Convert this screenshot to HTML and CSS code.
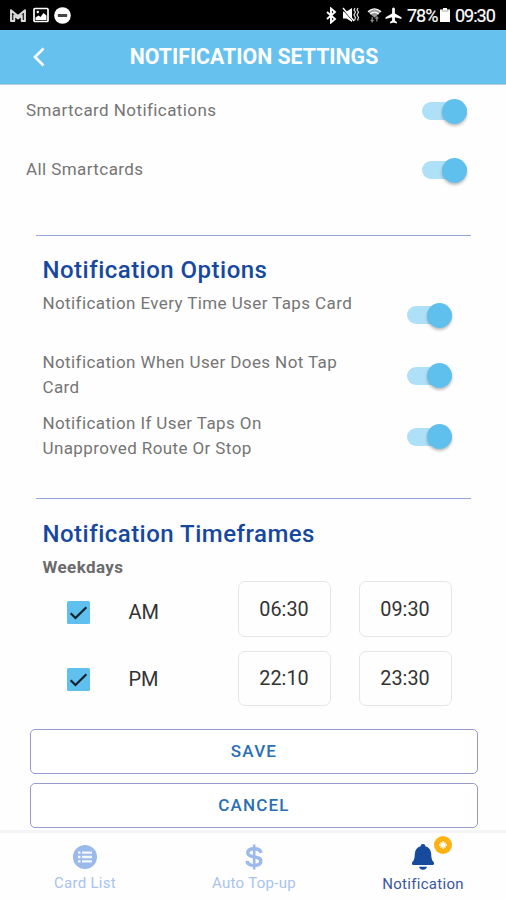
FILE: index.html
```html
<!DOCTYPE html>
<html lang="en">
<head>
<meta charset="utf-8">
<title>Notification Settings</title>
<link rel="stylesheet" href="styles.css">
</head>
<body>
<div class="status">
  <svg class="s-mail" viewBox="0 0 18 16"><path d="M2 14V3.200L9 9l7-5.800V14h-3.300V8.500L9 11.500 5.300 8.500V14z" fill="#333" stroke="#ddd" stroke-width="1.900" stroke-linejoin="round"/></svg>
  <svg class="s-pic" viewBox="0 0 16 16"><rect x="1" y="1.500" width="14" height="13" rx="1" fill="none" stroke="#fff" stroke-width="1.700"/><path d="M2.500 13V10.500L5.500 8.500l2 1.500 3-4 3 2.500V13z" fill="#fff"/><circle cx="4.800" cy="5" r="1.200" fill="#fff"/></svg>
  <svg class="s-dnd" viewBox="0 0 18 18"><circle cx="9" cy="9" r="8.800" fill="#fff"/><rect x="4" y="7.500" width="10" height="3" rx=".6" fill="#444"/></svg>
  <span class="grow"></span>
  <svg class="s-bt" viewBox="0 0 12 16"><path d="M2 4.500l8 7-4 3.500V1l4 3.500-8 7" fill="none" stroke="#fff" stroke-width="1.900"/></svg>
  <svg class="s-mute" viewBox="0 0 18 16"><path d="M1 4.500h3.500L10 1v14l-5.500-3.500H1z" fill="#fff"/><path d="M1 3l11 12" stroke="#000" stroke-width="1"/><path d="M1 1l11 13" stroke="#fff" stroke-width="1.400"/><path d="M13 1l-1 2 1.500 2L12 8l1.500 2.500-1 3M16 1l-1 2 1.500 2L15 8l1.500 2.500-1 3" fill="none" stroke="#ddd" stroke-width="1.200"/></svg>
  <svg class="s-wifi" viewBox="0 0 16 16"><path d="M1 4.500Q8-1.500 15 4.500L8 11z" fill="#999"/><path d="M1 4.500Q8-1.500 15 4.500M3.500 7Q8 3 12.500 7" fill="none" stroke="#fff" stroke-width="1.400"/><path d="M5.500 10v5M4 13.200l1.500 2 1.500-2M10.500 15v-5M9 12l1.500-2 1.500 2" fill="none" stroke="#888" stroke-width="1.300"/></svg>
  <svg class="s-plane" viewBox="0 0 16 16"><path d="M8 .5c.9 0 1.300.8 1.300 1.700V6l6.200 3.700v1.700L9.300 9.600v3.200l1.900 1.400v1.300L8 14.600l-3.200.9v-1.300l1.900-1.400V9.600L.5 11.400V9.700L6.700 6V2.200C6.700 1.300 7.100.5 8 .5z" fill="#fff"/></svg>
  <span class="pct">78%</span>
  <svg class="s-bat" viewBox="0 0 10 14"><path d="M3 0h4v1.500h3V14H0V1.500h3z" fill="#fff"/><path d="M1.500 3h7" stroke="#aaa"/></svg>
  <span class="clock">09:30</span>
</div>
<header class="bar">
  <svg class="back" viewBox="0 0 14 22"><path d="M11.500 2.500L3 11l8.500 8.500" fill="none" stroke="#fff" stroke-width="2.600"/></svg>
  <h1>NOTIFICATION SETTINGS</h1>
</header>
<main>
  <section class="cards">
    <div class="row"><span>Smartcard Notifications</span><i class="toggle"></i></div>
    <div class="row"><span>All Smartcards</span><i class="toggle"></i></div>
  </section>
  <section class="group options">
    <h2>Notification Options</h2>
    <div class="opt first"><p>Notification Every Time User Taps Card</p><i class="toggle"></i></div>
    <div class="opt"><p>Notification When User Does Not Tap<br>Card</p><i class="toggle"></i></div>
    <div class="opt"><p>Notification If User Taps On<br>Unapproved Route Or Stop</p><i class="toggle"></i></div>
  </section>
  <section class="group frames">
    <h2>Notification Timeframes</h2>
    <h3>Weekdays</h3>
    <div class="times">
      <svg class="check" viewBox="0 0 22 22"><rect width="22" height="22" rx="1.500" fill="#5fc0ee"/><path d="M3.500 11.800l4.600 4.500L18.500 6" fill="none" stroke="#10202c" stroke-width="2.100"/></svg>
      <span class="half">AM</span><span class="time">06:30</span><span class="time">09:30</span>
      <svg class="check" viewBox="0 0 22 22"><rect width="22" height="22" rx="1.500" fill="#5fc0ee"/><path d="M3.500 11.800l4.600 4.500L18.500 6" fill="none" stroke="#10202c" stroke-width="2.100"/></svg>
      <span class="half">PM</span><span class="time">22:10</span><span class="time">23:30</span>
    </div>
  </section>
  <div class="actions"><button>SAVE</button><button>CANCEL</button></div>
</main>
<nav>
  <a class="tab"><svg class="ico" viewBox="0 0 26 26"><circle cx="13" cy="13" r="12" fill="#9bb9ea"/><path d="M6 8.700h2.500M6 13h2.500M6 17.300h2.500M10 8.700h10M10 13h10M10 17.300h10" stroke="#f4f8ff" stroke-width="2.300"/></svg><span>Card List</span></a>
  <a class="tab"><svg class="ico" viewBox="0 0 26 26"><path d="M20 8.800C19.500 6.300 17 4.800 13.200 4.800 9.200 4.800 6.800 6.500 6.800 9c0 5.600 13 2.200 13 8 0 2.700-2.500 4.400-6.600 4.400-4.200 0-6.900-1.700-7.200-4.600" fill="none" stroke="#9bb9ea" stroke-width="3.400"/><path d="M13.200.5v25" stroke="#9bb9ea" stroke-width="2.600"/></svg><span>Auto Top-up</span></a>
  <a class="tab active"><svg class="ico" viewBox="0 0 26 26"><path d="M13 0c1.400 0 2.300.9 2.300 2.200 3.700 1 5.700 3.800 5.900 7.800.2 4.500.7 6.300 2.600 8.200.6.700.3 2.800-1 2.800H3.200c-1.300 0-1.600-2.100-1-2.800C4.100 16.300 4.600 14.500 4.800 10c.2-4 2.200-6.800 5.900-7.800C10.700.9 11.600 0 13 0z" fill="#164b9d"/><path d="M9 22.800h8c-.4 1.900-2 3-4 3s-3.600-1.100-4-3z" fill="#164b9d"/></svg><svg class="badge" viewBox="0 0 18 18"><circle cx="9" cy="9" r="9" fill="#fcb312"/><path d="M9 5v8M5 9h8M6.500 6.500l5 5M11.500 6.500l-5 5" stroke="#fff" stroke-width="1.300"/></svg><span>Notification</span></a>
</nav>
</body>
</html>
```
FILE: styles.css
```css
* { box-sizing: border-box; }
body {
  margin: 0;
  width: 506px;
  height: 900px;
  overflow: hidden;
  display: flex;
  flex-direction: column;
  background: #fefefe;
  font-family: Roboto, "Liberation Sans", sans-serif;
  color: #757575;
}
h1, h2, h3, p { margin: 0; }

.status {
  flex: none;
  height: 30px;
  display: flex;
  align-items: center;
  padding: 0 11px 0 9px;
  background: #000;
  color: #fff;
  font-size: 18px;
  line-height: 31px;
}
.status svg { flex: none; }
.s-mail { width: 18px; height: 16px; }
.s-pic { width: 16px; height: 16px; margin-left: 6px; }
.s-dnd { width: 17px; height: 17px; margin-left: 5px; }
.grow { flex: 1; }
.s-bt { width: 12px; height: 17px; margin-right: 5px; }
.s-mute { width: 18px; height: 16px; margin-right: 7px; }
.s-wifi { width: 15px; height: 16px; margin-right: 3px; }
.s-plane { width: 17px; height: 17px; margin-right: 5px; }
.s-bat { width: 10px; height: 14px; margin: 0 5px 0 4px; }
.pct, .clock { letter-spacing: -1px; -webkit-text-stroke: 0.2px #fff; }
.pct { width: 29px; }
.clock { width: 40px; white-space: nowrap; }

.bar {
  flex: none;
  height: 55px;
  display: grid;
  grid-template-columns: 48px 1fr 46px;
  align-items: center;
  background: #66c1ef;
  border-bottom: 1px solid #b5cfdd;
}
.back { width: 14px; height: 22px; margin-left: 32px; }
h1 {
  text-align: center;
  color: #fff;
  font-size: 21.300px;
  line-height: 54px;
  font-weight: 700;
  white-space: nowrap;
}

main { flex: none; height: 745px; }
.cards { height: 150px; padding: 0 39px 0 26px; }
.row {
  display: flex;
  justify-content: space-between;
  align-items: center;
  font-size: 17px;
  letter-spacing: 0.420px;
}
.row:first-child { height: 52px; }
.row:nth-child(2) { height: 66px; }
.row span { margin-bottom: 2px; }

.toggle {
  flex: none;
  width: 45px;
  height: 18px;
  border-radius: 9px;
  background: #aee0f8;
  display: flex;
  justify-content: flex-end;
  align-items: center;
}
.toggle::after {
  content: "";
  width: 25px;
  height: 25px;
  border-radius: 50%;
  background: #5fc0ee;
  box-shadow: 0 2px 3px rgba(0, 0, 0, 0.25);
}

.group { margin: 0 35px 0 36px; border-top: 1.500px solid #94a6d8; padding-left: 6.500px; }
.options { height: 263px; padding-top: 19px; }
.frames { height: 230px; padding-top: 20px; }
h2 {
  color: #17489f;
  font-size: 24px;
  line-height: 30px;
  font-weight: 500;
  letter-spacing: 0.480px;
  white-space: nowrap;
}
.opt {
  height: 61px;
  display: flex;
  justify-content: space-between;
  align-items: center;
  padding-right: 19px;
  font-size: 17px;
  line-height: 24.500px;
  letter-spacing: 0.400px;
  white-space: nowrap;
}
.opt p { margin-bottom: 2px; }
.opt.first { height: 60px; }
.opt.first p { margin-bottom: 24px; }

h3 { font-size: 17px; line-height: 24px; margin-top: 6px; font-weight: 700; letter-spacing: 0.400px; color: #6b6b6b; }
.times {
  display: grid;
  grid-template-columns: 62px 109px 93px 93px;
  grid-template-rows: 56px 55px;
  row-gap: 14px;
  margin: 2px 0 0 24px;
  color: #333;
}
.check { width: 23px; height: 23px; align-self: end; margin-bottom: 13px; }
.half { align-self: end; font-size: 20px; line-height: 24px; margin-bottom: 13px; }
.check:nth-child(n+5), .half:nth-child(n+5) { margin-bottom: 15px; }
.time {
  border: 1.500px solid #e6e6e6;
  border-radius: 7px;
  font-size: 19.800px;
  display: grid;
  place-items: center;
}
.time:nth-child(4n) { margin: 0 -28px 0 28px; }

.actions {
  display: grid;
  gap: 9px;
  padding: 0 28px 0 30px;
  margin-top: 1px;
}
button {
  height: 45px;
  border: 1.500px solid #9899cc;
  border-radius: 5px;
  background: #fff;
  padding: 0 0 2px;
  color: #2a6fb3;
  font: 500 17px Roboto, "Liberation Sans", sans-serif;
  letter-spacing: 1.200px;
}

nav {
  flex: none;
  height: 70px;
  display: grid;
  grid-template-columns: 170px 168px 170px;
  border-top: 3px solid #f5f5f7;
}
.tab {
  position: relative;
  display: flex;
  flex-direction: column;
  align-items: center;
  color: #a9c3ef;
  padding-top: 11px;
  font-size: 15px;
  letter-spacing: 0.300px;
}
.tab span { line-height: 20px; margin-top: 3px; }
.ico { width: 26px; height: 26px; }
.active { color: #3b579f; }
.active span { margin-top: 4px; }
.badge { position: absolute; width: 18px; height: 18px; left: 96px; top: 3px; }
```
